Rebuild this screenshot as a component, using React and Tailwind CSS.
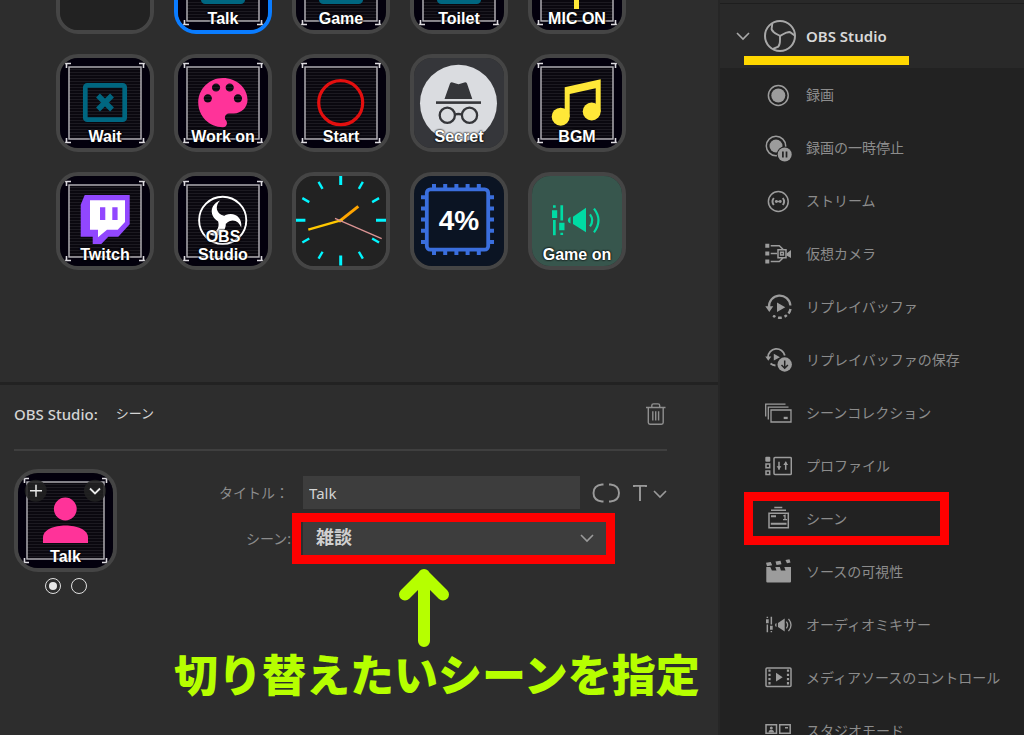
/* ---------- key artwork (98 x 98 key, 4px border) ---------- */

function Frame({ size = 98 }) {
  const lo = 13;
  const hi = size - 13;
  const c = size - 9;
  return (
    <g>
      <rect x="4" y="4" width={size - 8} height={size - 8} fill="#03000d" />
      <rect x={lo} y={lo} width={hi - lo} height={hi - lo} fill="#0a080f" />
      {Array.from({ length: Math.floor((hi - lo) / 3) }, (_, i) => (
        <rect key={i} x={lo} y={lo + 2 + i * 3} width={hi - lo} height="1" fill="#1c1a21" />
      ))}
      <rect x={lo} y={lo} width={hi - lo} height={hi - lo} fill="none" stroke="#b9b7bd" strokeWidth="1.4" />
      <path
        d={`M9 9.5H15M10.5 9V14M${c} 9.5H${c - 6}M${c - 1.5} 9V14M9 ${c - 0.5}H15M10.5 ${c}V${c - 5}M${c} ${c - 0.5}H${c - 6}M${c - 1.5} ${c}V${c - 5}`}
        stroke="#dddbe0"
        strokeWidth="1.6"
        fill="none"
      />
    </g>
  );
}

const Screen = ({ children }) => (
  <g>
    <Frame />
    <rect x="29.3" y="31.3" width="39.4" height="34.4" rx="2" fill="none" stroke="#006680" strokeWidth="4.7" />
    {children}
  </g>
);

const WaitArt = () => (
  <Screen>
    <path d="M42 41.5L56 55.5M56 41.5L42 55.5" stroke="#006680" strokeWidth="5.4" />
  </Screen>
);

const MicArt = () => (
  <g>
    <Frame />
    <g stroke="#ffe838" fill="none" strokeWidth="5">
      <rect x="43" y="28" width="11" height="24" rx="5.5" fill="#ffe838" stroke="none" />
      <path d="M34 47a14.5 14.5 0 0 0 29 0M48.5 61V73" />
    </g>
  </g>
);

const PaletteArt = () => (
  <g>
    <Frame />
    <path
      d="M12 3c-4.970 0-9 4.030-9 9s4.030 9 9 9c.830 0 1.500-.670 1.500-1.500 0-.390-.150-.740-.390-1.010-.230-.260-.380-.610-.380-.990 0-.830.670-1.500 1.500-1.500H16c2.760 0 5-2.240 5-5 0-4.420-4.030-8-9-8zm-5.500 9c-.830 0-1.500-.670-1.500-1.500S5.670 9 6.500 9 8 9.670 8 10.500 7.330 12 6.500 12zm3-4C8.670 8 8 7.330 8 6.500S8.670 5 9.500 5s1.500.670 1.500 1.500S10.330 8 9.500 8zm5 0c-.830 0-1.500-.670-1.500-1.500S13.670 5 14.500 5s1.500.670 1.500 1.500S15.330 8 14.500 8zm3 4c-.830 0-1.500-.670-1.500-1.500S16.670 9 17.500 9s1.500.670 1.500 1.500-.670 1.500-1.500 1.500z"
      fill="#ff3399"
      transform="translate(16 15.700) scale(2.740)"
    />
  </g>
);

const StartArt = () => (
  <g>
    <Frame />
    <circle cx="48.7" cy="48.7" r="22" fill="none" stroke="#e30f0f" strokeWidth="3.2" />
  </g>
);

const SecretArt = () => (
  <g>
    <rect x="4" y="4" width="90" height="90" fill="#35363a" />
    <circle cx="48.5" cy="49.3" r="38.5" fill="#dadce0" />
    <path d="M34.5 45L40 29.6Q40.800 28 42.600 28.400L48.500 30.200L54.400 28.400Q56.200 28 57 29.600L62.300 45Z" fill="#35363a" />
    <rect x="26" y="47.300" width="45" height="2.600" fill="#35363a" />
    <g fill="none" stroke="#35363a" strokeWidth="2.300">
      <circle cx="37.300" cy="61.300" r="7.600" />
      <circle cx="59.500" cy="61.300" r="7.600" />
      <path d="M44.800 60.500Q48.400 59.500 52 60.500" />
    </g>
  </g>
);

const MusicArt = () => (
  <g fill="#ffe838">
    <Frame />
    <circle cx="32.700" cy="62.700" r="9" />
    <circle cx="63.700" cy="57.500" r="9" />
    <path d="M36.700 33.300L72.700 25.300V57.500H67.700V34.300L41.700 40V62.700H36.700Z" />
  </g>
);

const TwitchArt = () => (
  <g>
    <Frame />
    <path d="M28.700 23H73.700V52.300L62.300 64.700H52.300L45.300 72H36.700V64.700H24.700V32.700Z" fill="#9147ff" />
    <path d="M34 28.300H69V50L61.700 57.700H51L42 65.300V57.700H34Z" fill="#fff" />
    <path d="M44 35.300h5.300v12.700h-5.300ZM56.300 35.300h5.300v12.700h-5.300Z" fill="#9147ff" />
  </g>
);

const ObsArt = () => (
  <g>
    <Frame />
    <circle cx="48.700" cy="48.300" r="23.600" fill="none" stroke="#fff" strokeWidth="1.900" />
    {[0, 120, 240].map((a) => (
      <path
        key={a}
        d="M46 28.500C41 33.500 41.500 41.500 50 43.800L52 48.500L48 51C36 47.500 33.500 33.500 46 28.500Z"
        fill="#fff"
        transform={`rotate(${a} 48.700 48.300)`}
      />
    ))}
  </g>
);

const ClockArt = () => (
  <g>
    <rect x="4" y="4" width="90" height="90" fill="#222" />
    {Array.from({ length: 12 }, (_, i) => (
      <path
        key={i}
        d={i % 3 ? "M48.700 4V12" : "M48.700 3V13"}
        stroke="#00f6ff"
        strokeWidth={i % 3 ? 2.4 : 3}
        transform={`rotate(${i * 30} 48.700 48.300)`}
      />
    ))}
    <path d="M47 49.700L66.300 34.300" stroke="#ffa500" strokeWidth="3" />
    <path d="M50.500 47.800L16.300 57.700" stroke="#ffc800" strokeWidth="2.400" />
    <path d="M43 46.300L89.700 66.700" stroke="#dc9494" strokeWidth="1.300" />
  </g>
);

const CpuArt = () => (
  <g>
    <rect x="4" y="4" width="90" height="90" fill="#0b1423" />
    <g stroke="#3a6edd" fill="none">
      <rect x="16.800" y="17.300" width="61.400" height="60.400" rx="3.500" strokeWidth="3.800" />
      {[24, 35.2, 46.4, 57.6, 68.8].map((p) => (
        <path key={p} d={`M${p} 12v4M${p} 79v4M11 ${p + 1.2}h4M80 ${p + 1.2}h4`} strokeWidth="4" />
      ))}
    </g>
  </g>
);

const MixerArt = () => (
  <g fill="#00dba4">
    <rect x="4" y="4" width="90" height="90" fill="#37564d" />
    <path d="M25 33.300h2.700v2.400h-2.700ZM24 38.300h5.200v7.700h-5.200ZM25 48h2.700v15.300h-2.700ZM32.400 33.300h2.700v15.200h-2.700ZM31.200 50.700h5.300v7.600h-5.300ZM32.400 60.700h2.700v2.400h-2.700Z" />
    <path d="M42.500 44.800V51.500Q39.800 50.500 39.800 48.200T42.500 44.800ZM45 44.700L58 35.700V60.300L45 52Z" />
    <path d="M62 42.300Q66.500 48.300 62 54.300M66 36.700Q75 48.300 66 60.300" fill="none" stroke="#00dba4" strokeWidth="2.200" />
  </g>
);

const EmptyArt = () => <rect x="4" y="4" width="90" height="90" fill="#222" />;

const keys = [
  { art: EmptyArt, label: "" },
  { art: Screen, label: "Talk", selected: true },
  { art: Screen, label: "Game" },
  { art: Screen, label: "Toilet" },
  { art: MicArt, label: "MIC ON" },
  { art: WaitArt, label: "Wait" },
  { art: PaletteArt, label: "Work on" },
  { art: StartArt, label: "Start" },
  { art: SecretArt, label: "Secret" },
  { art: MusicArt, label: "BGM" },
  { art: TwitchArt, label: "Twitch" },
  { art: ObsArt, label: "OBS Studio" },
  { art: ClockArt, label: "", name: "Clock" },
  { art: CpuArt, label: "4%", large: true },
  { art: MixerArt, label: "Game on" },
];

function Key({ art: Art, label, selected, large, name }) {
  return (
    <button
      type="button"
      aria-label={label || name || "Empty"}
      className={`relative size-[98px] overflow-hidden rounded-[22px] border-4 ${selected ? "border-[#0a7cff]" : "border-[#454545]"}`}
    >
      <svg viewBox="4 4 90 90" className="size-full" aria-hidden="true">
        <Art />
      </svg>
      <span
        className={
          large
            ? "absolute inset-0 flex items-center justify-center text-[28px] font-bold text-white"
            : "absolute inset-x-2 bottom-[2px] text-center text-base leading-[18px] font-bold text-white [text-shadow:0_0_2px_#000,0_0_2px_#000]"
        }
      >
        {label.includes("OBS") ? (
          <>
            OBS
            <br />
            Studio
          </>
        ) : (
          <span className="whitespace-nowrap">{label}</span>
        )}
      </span>
    </button>
  );
}

/* ---------- action list icons (28 x 28) ---------- */

const BG = "#222222";
const line = { fill: "none", stroke: "currentColor", strokeWidth: 1.5 };

const icons = {
  record: (
    <>
      <circle cx="14.300" cy="14.500" r="9.900" {...line} />
      <circle cx="14.300" cy="14.500" r="7" />
    </>
  ),
  pause: (
    <>
      <circle cx="12" cy="12" r="9.700" {...line} />
      <circle cx="12" cy="12" r="6.500" />
      <circle cx="20.700" cy="20.500" r="8" fill={BG} />
      <circle cx="20.700" cy="20.500" r="7" />
      <path d="M18.900 17.500v6M22.500 17.500v6" stroke={BG} strokeWidth="1.700" />
    </>
  ),
  stream: (
    <>
      <circle cx="14.300" cy="14.500" r="9.900" {...line} />
      <circle cx="12.300" cy="14.500" r="1.400" />
      <circle cx="16.300" cy="14.500" r="1.400" />
      <path d="M12.300 14.500h4" {...line} />
      <path d="M9.800 11Q7.200 14.500 9.800 18M18.800 11Q21.400 14.500 18.800 18" {...line} strokeWidth="1.900" />
    </>
  ),
  camera: (
    <>
      <path d="M1.300 3.800h4v4h-4ZM1.300 11.500h4v4h-4ZM1.300 19.500h4v4h-4ZM22.500 13.500L27 10v8l-4.500-2.500Z" />
      <path d="M6.700 5.800H15.300L19 9.300M6.700 13.500H13M6.700 21.500H15.300L19 18M14 9.800h8v8h-8ZM16.600 12.300h2.800v2.800h-2.800Z" {...line} />
    </>
  ),
  replay: (
    <>
      <path d="M5 14.200A10.700 10.700 0 0 1 26.400 12.500" {...line} strokeWidth="2.200" />
      <path d="M26.500 16A11 11 0 0 1 24.500 20.500M22.800 22.200A11 11 0 0 1 20.500 23.700M17.800 24.600A11 11 0 0 1 14 24.600" {...line} strokeWidth="2.400" />
      <circle cx="10.200" cy="23.300" r="1.400" />
      <path d="M1.300 13.200H9.300L5.300 19ZM13 9.500V18.900L21.300 14.200Z" />
    </>
  ),
  replaySave: (
    <>
      <path d="M4 11.200A8.500 8.500 0 0 1 20.800 9.500M6.500 17.500A8 8 0 0 0 11.500 19.500" {...line} strokeWidth="1.800" />
      <path d="M1.300 10.500H7.300L4.300 14.800ZM9.800 7.800V14.500L16 11.200Z" />
      <circle cx="20.700" cy="18.500" r="8.200" fill={BG} />
      <circle cx="20.700" cy="18.500" r="7.200" />
      <path d="M20.700 14.500v7.500M17.500 19l3.200 3.200L23.900 19" fill="none" stroke={BG} strokeWidth="1.500" />
    </>
  ),
  collection: (
    <>
      <path d="M7 11h20v12h-20ZM4.300 20.500V8.200H24.500M1.700 17.500V5.200H21.500" {...line} strokeWidth="1.300" />
      <rect x="19.700" y="17.800" width="4" height="2.300" />
    </>
  ),
  profile: (
    <>
      <rect x="1.300" y="4.800" width="5" height="5" rx="1" />
      <path d="M2 12h3.700v3.700h-3.700ZM2 18.900h3.700v3.700h-3.700Z" {...line} />
      <rect x="10" y="5.500" width="17.300" height="17" rx="1" {...line} />
      <path d="M15 9.800v8M21.700 9.800v8" {...line} />
      <path d="M12.600 14.300h4.800L15 17.500ZM19.300 13h4.800L21.700 9.500Z" />
    </>
  ),
  scene: (
    <>
      <path d="M10.300 2.600h8M7 5.300h15M5 8.300h19.300v14.500h-19.300Z" {...line} />
      <path d="M7 10.200h5v2h-5ZM6.800 17.800h15.700v2h-15.700Z" />
      <path d="M19.300 11l1.700-.700v4.200M19 14.700h4" {...line} strokeWidth="1.300" />
    </>
  ),
  clapper: (
    <>
      <path d="M2.300 9h4l1.600 3.500h4.600L11.300 9h4.600l1 3.500h4.600L20.300 9H27V23.500q0 1-1 1H3.300q-1 0-1-1Z" />
      <path d="M2 4.800l4.700-.900 1.500 3.300-5.200 1ZM11.500 3.500l5-.800 1 3.500-5 .8ZM21.500 2l4-.7 1 3.300-3.500.7Z" />
    </>
  ),
  mixer: (
    <>
      <path d="M2.600 5.800h1.500v1.300h-1.500ZM2 8.200h2.700v4h-2.700ZM2.600 13.500h1.500v7.700h-1.500ZM6.600 5.800h1.500v7.700h-1.500ZM6 14.700h2.700v4h-2.700ZM6.600 20h1.500v1.300h-1.500Z" />
      <path d="M12.500 12V16Q11 15.500 11 14T12.500 12ZM14 12L20.700 7.500V20.500L14 16Z" />
      <path d="M22.300 10.700Q25 14 22.300 17.300M24.500 7.800Q29.500 14 24.500 20.200" {...line} strokeWidth="1.300" />
    </>
  ),
  media: (
    <>
      <rect x="2" y="4" width="25" height="18.500" rx="1" {...line} />
      <path d="M5.500 5.500V21.500M24 5.500V21.500" {...line} strokeWidth="2.200" strokeDasharray="2.300 1.900" />
      <path d="M12 8.800V17.600L18.700 13.200Z" />
    </>
  ),
  studio: (
    <>
      <path d="M2 7.800h10.500v8.500h-10.500ZM15.700 7.800h10.500v8.500h-10.500Z" {...line} />
      <circle cx="7.300" cy="10.900" r="1.500" />
      <path d="M4.600 15.500q0-2.700 2.700-2.700t2.700 2.700ZM21 10h3v1.600h-3Z" />
    </>
  ),
};

const actions = [
  ["record", "録画"],
  ["pause", "録画の一時停止"],
  ["stream", "ストリーム"],
  ["camera", "仮想カメラ"],
  ["replay", "リプレイバッファ"],
  ["replaySave", "リプレイバッファの保存"],
  ["collection", "シーンコレクション"],
  ["profile", "プロファイル"],
  ["scene", "シーン"],
  ["clapper", "ソースの可視性"],
  ["mixer", "オーディオミキサー"],
  ["media", "メディアソースのコントロール"],
  ["studio", "スタジオモード"],
];

const Chevron = ({ className }) => (
  <svg viewBox="0 0 14 14" className={className} fill="none" stroke="currentColor" strokeWidth="1.600" aria-hidden="true">
    <path d="M1 4l6 6 6-6" />
  </svg>
);

const ObsOutline = () => (
  <svg viewBox="0 0 32 32" className="size-8" fill="none" stroke="currentColor" aria-hidden="true">
    <circle cx="16" cy="16" r="15" strokeWidth="2" />
    {[0, 120, 240].map((a) => (
      <path key={a} d="M16 16C12.500 13.800 8.500 12.500 7.600 9.200L8.300 3.500M7.600 9.200L9.500 11.800" strokeWidth="1.900" transform={`rotate(${a} 16 16)`} />
    ))}
  </svg>
);

function Sidebar() {
  return (
    <aside className="flex w-[306px] shrink-0 flex-col border-l-2 border-[#262626] bg-[#222222]">
      <div className="h-1 shrink-0 border-b border-[#1e1e1e] bg-[#292929]" />
      <div className="relative h-16 shrink-0 bg-[#292929]">
        <button type="button" className="flex size-full items-center gap-[10px] pl-4 text-[#a8a8a8]">
          <Chevron className="mr-1 size-[14px]" />
          <ObsOutline />
          <span className="text-[15px] font-semibold text-[#d8d8d8]">OBS Studio</span>
        </button>
        <span className="absolute bottom-[3px] left-6 h-[9px] w-[165px] bg-[#ffd700]" />
      </div>
      <ul>
        {actions.map(([icon, label]) => (
          <li key={icon} className="relative">
            <button type="button" className="flex h-[53px] w-full items-center gap-[14px] pl-11 text-[#9c9c9c]">
              <svg viewBox="0 0 28 28" className="size-7 shrink-0" fill="currentColor" aria-hidden="true">
                {icons[icon]}
              </svg>
              <span className="text-sm whitespace-nowrap text-[#8c8c8c]">{label}</span>
            </button>
            {icon === "scene" && (
              <span className="pointer-events-none absolute inset-y-0 left-6 w-[205px] border-[9px] border-[#ff0000]" />
            )}
          </li>
        ))}
      </ul>
    </aside>
  );
}

function Preview() {
  return (
    <div className="w-[103px] shrink-0">
      <div className="relative h-[103px] overflow-hidden rounded-[24px] border-4 border-[#454545]">
        <svg viewBox="4 4 95 95" className="size-full" aria-hidden="true">
          <Frame size={103} />
          <circle cx="21.700" cy="21.700" r="11" fill="#222" fillOpacity=".85" />
          <circle cx="81" cy="21.700" r="11" fill="#222" fillOpacity=".85" />
          <circle cx="51.300" cy="40" r="11.400" fill="#ff3399" />
          <path d="M29 74V68.500C29 52.500 74 52.500 74 68.500V74Z" fill="#ff3399" />
          <path d="M16 21.700H28M22 15.700V27.700" stroke="#e8e8e8" strokeWidth="1.500" />
          <path d="M76 19.500l5 5 5-5" stroke="#e8e8e8" strokeWidth="1.800" fill="none" />
        </svg>
        <span className="absolute inset-x-0 bottom-[2px] text-center text-base leading-[18px] font-bold text-white [font-family:'Liberation_Sans',Arial,sans-serif] [text-shadow:0_0_2px_#000]">
          Talk
        </span>
      </div>
      <div className="mt-[6px] flex justify-center gap-[10px]">
        {[1, 2].map((n) => (
          <input
            key={n}
            type="radio"
            name="state"
            aria-label={`State ${n}`}
            defaultChecked={n === 1}
            className="size-4 appearance-none rounded-full border border-[#e0e0e0] bg-clip-content p-[3px] checked:bg-[#e8e8e8]"
          />
        ))}
      </div>
    </div>
  );
}

function Inspector() {
  return (
    <section className="relative flex-1 border-t-[3px] border-[#222222] pr-[51px] pl-[14px]">
      <header className="flex h-[58px] items-center text-[15px] text-[#d4d4d4]">
        <h2 className="font-medium">OBS Studio:</h2>
        <span className="ml-[18px] text-[13px]">シーン</span>
        <button type="button" aria-label="削除" className="ml-auto text-[#8f8f8f]">
          <svg viewBox="0 0 22 24" className="h-6 w-[22px]" fill="none" stroke="currentColor" strokeWidth="1.400" aria-hidden="true">
            <path d="M1 5.500H20.500M6.800 5.200V3.600Q6.800 1.900 8.500 1.900H13Q14.700 1.900 14.700 3.600V5.200M3.300 6V20.500Q3.300 22.200 5 22.200H16.500Q18.200 22.200 18.200 20.500V6M7.800 9.200V18.500M10.700 9.200V18.500M13.600 9.200V18.500" />
          </svg>
        </button>
      </header>
      <hr className="mt-[6px] border-t-2 border-[#3f3f3f]" />
      <div className="mt-[18px] flex">
        <Preview />
        <div className="flex flex-1 flex-col gap-[13px] pt-[7px] text-sm">
          <div className="flex h-[33px] items-center">
            <label htmlFor="title" className="mr-[14px] w-[172px] text-right text-[#8c8c8c]">
              タイトル：
            </label>
            <input
              id="title"
              type="text"
              defaultValue="Talk"
              className="h-full w-0 flex-1 bg-[#3d3d3d] px-[6px] text-[15px] text-[#d4d4d4] outline-none"
            />
            <button type="button" aria-label="更新" className="ml-3 text-[#9a9a9a]">
              <svg viewBox="0 0 28 20" className="h-5 w-7" fill="none" stroke="currentColor" strokeWidth="1.900" aria-hidden="true">
                <path d="M11.500 1.500H10Q1.500 2.500 1.500 10T10 18.500H11.500M17 1.500H18.500Q27 2.500 27 10T18.500 18.500H17" />
              </svg>
            </button>
            <button type="button" aria-label="文字スタイル" className="ml-[13px] flex items-center gap-[6px] text-[#9a9a9a]">
              <svg viewBox="0 0 14 18" className="h-[18px] w-[14px]" fill="none" stroke="currentColor" strokeWidth="1.900" aria-hidden="true">
                <path d="M1 3V1.900H13V3M7 1.900V17" />
              </svg>
              <Chevron className="mt-[3px] size-[14px]" />
            </button>
          </div>
          <div className="flex h-[33px] items-center">
            <label htmlFor="scene" className="mr-3 w-[174px] text-right text-[#8c8c8c]">
              シーン:
            </label>
            <div className="relative mr-[61px] h-full flex-1">
              <select
                id="scene"
                className="size-full appearance-none bg-[#3d3d3d] px-[13px] pb-[3px] text-[18px] leading-6 font-bold text-[#d0d0d0] outline-none"
              >
                <option>雑談</option>
              </select>
              <Chevron className="pointer-events-none absolute top-[9px] right-3 size-[14px] text-[#9a9a9a]" />
              <span className="pointer-events-none absolute -inset-y-[9px] -right-[9px] -left-[11px] border-[9px] border-[#ff0000]" />
            </div>
          </div>
        </div>
      </div>
      <div className="pointer-events-none absolute top-[183px] left-[174px] text-[#b6ff00]">
        <svg viewBox="0 0 50 80" className="ml-[225px] h-20 w-[50px]" fill="none" stroke="currentColor" strokeWidth="12" strokeLinecap="round" strokeLinejoin="round" aria-hidden="true">
          <path d="M25 7V73M6 26.500L25 7.500L44 26.500" />
        </svg>
        <p className="text-[44px] leading-[54px] font-black whitespace-nowrap">切り替えたいシーンを指定</p>
      </div>
    </section>
  );
}

export default function App() {
  return (
    <div className="flex h-screen overflow-hidden bg-[#2d2d2d] [font-family:'Noto_Sans','Noto_Sans_CJK_JP',sans-serif]">
      <main className="flex min-w-0 flex-1 flex-col">
        <div className="h-[382px] shrink-0 overflow-hidden pl-14 [font-family:'Liberation_Sans',Arial,sans-serif]">
          <div className="-mt-16 grid w-max grid-cols-5 gap-5">
            {keys.map((k, i) => (
              <Key key={i} {...k} />
            ))}
          </div>
        </div>
        <Inspector />
      </main>
      <Sidebar />
    </div>
  );
}
